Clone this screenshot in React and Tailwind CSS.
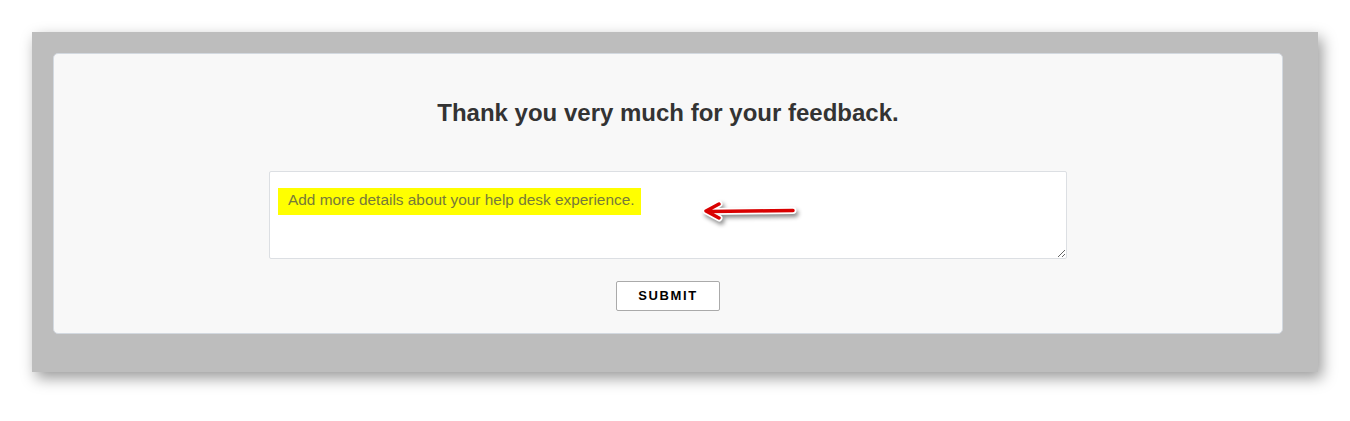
export default function App() {
  return (
    <div className="w-[1350px] h-[421px] bg-white pt-8 px-8 font-['Liberation_Sans',Arial,sans-serif]">
      <div className="h-[340px] bg-[#bdbdbd] pt-[21px] pl-[21px] pr-[35px] pb-[38px] shadow-[4px_6px_14px_rgba(0,0,0,0.4)]">
        <div className="h-full bg-[#f8f8f8] border border-[#d3d9e0] rounded-[5px] flex flex-col items-center pt-[44px]">
          <h1 className="text-[24px] leading-[30px] font-bold text-[#333]">Thank you very much for your feedback.</h1>
          <div className="relative mt-[43px] w-[798px] h-[88px]">
            <textarea className="w-full h-full bg-white border border-[#dcdfe3] rounded-[2px] block" />
            <span className="absolute left-[9px] top-[17px] h-[27px] w-[363px] bg-[#ffff00] text-[15.4px] leading-[24px] text-[#777a3a] pl-[10px]">
              Add more details about your help desk experience.
            </span>
            <svg className="absolute left-[431px] top-[29px] drop-shadow-[2px_3px_2px_rgba(0,0,0,0.45)]" width="100" height="24" viewBox="0 0 100 24">
              <g fill="none" strokeLinecap="round" strokeLinejoin="round">
                <path d="M9 11.5 L93 10.5 M19 4 L6 11 L19 18" stroke="#fff" strokeWidth="7" />
                <path d="M9 11.5 L93 10.5 M19 4 L6 11 L19 18" stroke="#d90000" strokeWidth="3.5" />
              </g>
            </svg>
          </div>
          <button className="mt-[22px] w-[104px] h-[30px] bg-white border border-[#aaa] rounded-[2px] text-[13px] font-bold tracking-[1.6px] text-black">
            SUBMIT
          </button>
        </div>
      </div>
    </div>
  );
}
